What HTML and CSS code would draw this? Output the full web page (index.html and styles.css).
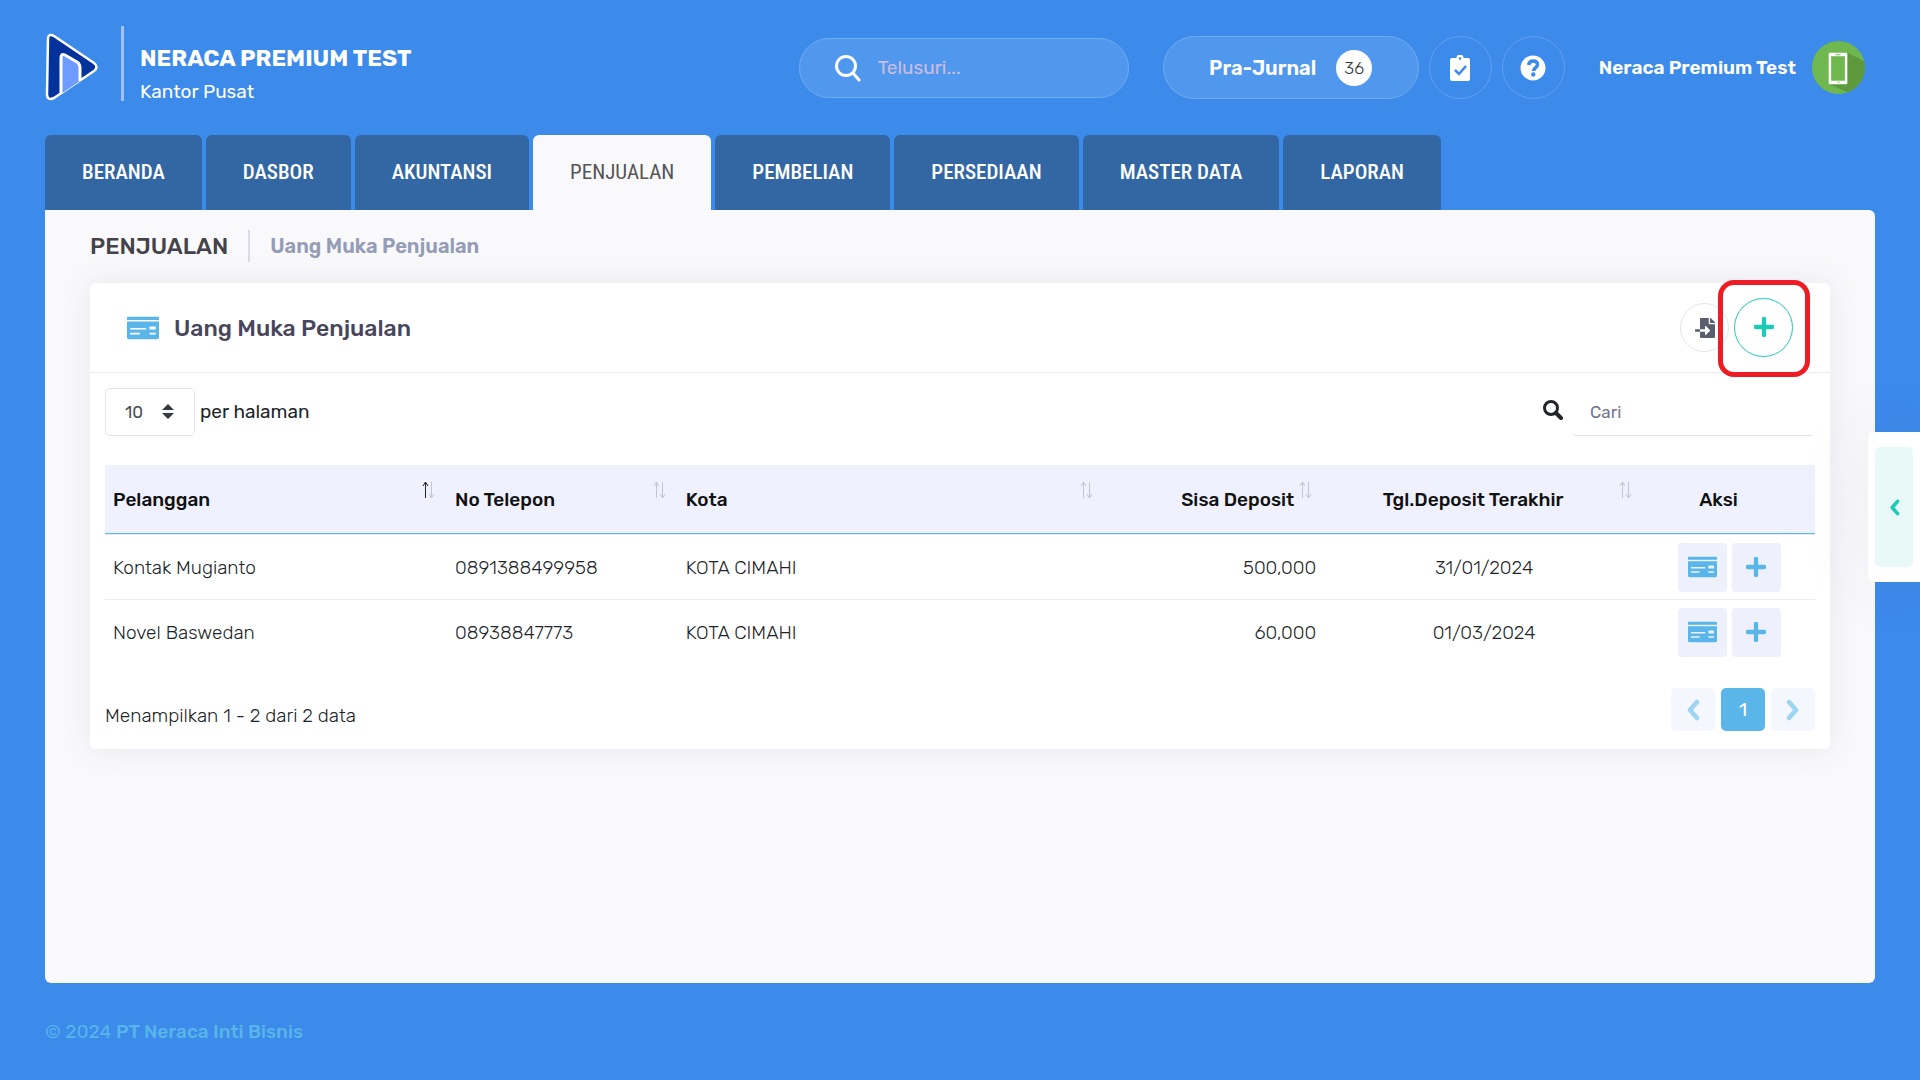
FILE: index.html
```
<!DOCTYPE html>
<html lang="id">
<head>
<meta charset="utf-8">
<meta name="viewport" content="width=device-width, initial-scale=1.0">
<title>Uang Muka Penjualan</title>
<link rel="stylesheet" href="styles.css">
</head>
<body>
<!-- icon -->
<svg class="sprite" aria-hidden="true">
  <symbol id="money" viewBox="0 0 640 512"><path d="M0 448c0 17.67 14.33 32 32 32h576c17.67 0 32-14.33 32-32V128H0v320zm448-208c0-8.84 7.16-16 16-16h96c8.84 0 16 7.16 16 16v32c0 8.84-7.16 16-16 16h-96c-8.84 0-16-7.16-16-16v-32zm0 120c0-4.42 3.58-8 8-8h112c4.42 0 8 3.58 8 8v16c0 4.42-3.58 8-8 8H456c-4.42 0-8-3.58-8-8v-16zM64 264c0-4.42 3.58-8 8-8h304c4.42 0 8 3.58 8 8v16c0 4.42-3.58 8-8 8H72c-4.42 0-8-3.58-8-8v-16zm0 96c0-4.42 3.58-8 8-8h176c4.42 0 8 3.58 8 8v16c0 4.42-3.58 8-8 8H72c-4.42 0-8-3.58-8-8v-16zM624 32H16C7.16 32 0 39.16 0 48v48h640V48c0-8.84-7.16-16-16-16z"/></symbol>
  <symbol id="plus" viewBox="0 0 448 512"><path d="M416 208H272V64c0-17.67-14.33-32-32-32h-32c-17.67 0-32 14.33-32 32v144H32c-17.67 0-32 14.33-32 32v32c0 17.67 14.33 32 32 32h144v144c0 17.67 14.33 32 32 32h32c17.67 0 32-14.33 32-32V304h144c17.67 0 32-14.33 32-32v-32c0-17.67-14.33-32-32-32z"/></symbol>
  <symbol id="import" viewBox="0 0 512 512"><path d="M16 288c-8.8 0-16 7.2-16 16v32c0 8.8 7.2 16 16 16h112v-64H16zm489-183L407.1 7c-4.5-4.5-10.6-7-17-7H384v128h128v-6.1c0-6.3-2.5-12.4-7-16.9zm-153 31V0H152c-13.3 0-24 10.7-24 24v264h128v-65.2c0-14.3 17.3-21.4 27.4-11.3L379 308c6.6 6.7 6.6 17.4 0 24l-95.7 96.4c-10.1 10.1-27.4 3-27.4-11.3V352H128v136c0 13.3 10.7 24 24 24h336c13.3 0 24-10.7 24-24V160H376c-13.2 0-24-10.8-24-24z"/></symbol>
  <symbol id="left" viewBox="0 0 14 22"><path d="M11 3 4 11l7 8" fill="none" stroke="currentColor" stroke-width="4.500" stroke-linecap="round" stroke-linejoin="round"/></symbol>
  <symbol id="right" viewBox="0 0 14 22"><path d="m3 3 7 8-7 8" fill="none" stroke="currentColor" stroke-width="4.500" stroke-linecap="round" stroke-linejoin="round"/></symbol>
  <symbol id="sort" viewBox="0 0 16 20">
    <path d="M4.500 18V3M2 6l2.500-4L7 6" fill="none" stroke="currentColor"/>
    <path d="M10.500 2v15M8 14l2.500 4 2.500-4" fill="none" stroke="#c3c5d2"/>
  </symbol>
</svg>

<header class="topbar">
  <a class="brand" href="#" aria-label="Neraca">
    <svg class="logo" viewBox="0 0 54 68" aria-hidden="true">
      <path d="M3 6Q3 0 9 3L49 30Q54 34 49 38L9 65Q2 68 2 61Z" fill="#03329c" stroke="#fff" stroke-width="2.500" stroke-linejoin="round"/>
      <path d="M16 61V25q0-5 4-3l12 7q3 2 3 6v13Z" fill="#6d9bff"/>
      <path d="M16 61V25q0-5 4-3l12 7q3 2 3 6v13" fill="none" stroke="#fff" stroke-width="3"/>
    </svg>
  </a>
  <div class="company">
    <h1>NERACA PREMIUM TEST</h1>
    <span>Kantor Pusat</span>
  </div>
  <div class="search">
    <svg viewBox="0 0 28 28" aria-hidden="true"><circle cx="12" cy="12" r="9.500" fill="none" stroke="#fff" stroke-width="3"/><path d="m19 19 6 7" stroke="#fff" stroke-width="3" stroke-linecap="round"/></svg>
    <input type="text" placeholder="Telusuri..." aria-label="Telusuri">
  </div>
  <button type="button" class="prajurnal">Pra-Jurnal <span class="badge">36</span></button>
  <button type="button" class="round" aria-label="Tugas">
    <svg viewBox="0 0 20 26" aria-hidden="true"><path d="M2 3h4.500a3.500 3.500 0 0 1 7 0H18q2 0 2 2v19q0 2-2 2H2q-2 0-2-2V5q0-2 2-2Z" fill="#fff"/><circle cx="10" cy="3.500" r="1.300" fill="#3c8aea"/><path d="m5 15 4 4 7-8" fill="none" stroke="#3c8aea" stroke-width="2.500"/></svg>
  </button>
  <button type="button" class="round" aria-label="Bantuan">
    <svg viewBox="0 0 26 26" aria-hidden="true"><circle cx="13" cy="13" r="12.500" fill="#fff"/><path d="M8.500 10q1-4 4.500-4 4.500 0 4.500 3.800c0 3.200-4 2.700-4 6.200" fill="none" stroke="#3c8aea" stroke-width="3.500"/><circle cx="13.300" cy="19.500" r="2.200" fill="#3c8aea"/></svg>
  </button>
  <a class="user" href="#">
    <span>Neraca Premium Test</span>
    <svg viewBox="0 0 54 54" aria-hidden="true">
      <clipPath id="bulat"><circle cx="27" cy="27" r="27"/></clipPath>
      <circle cx="27" cy="27" r="27" fill="#6fb74f"/>
      <path d="M36 12 54 21V54H40L18 44Z" fill="#5f993e" clip-path="url(#bulat)"/>
      <rect x="17" y="12" width="19" height="32" rx="1" fill="#fff"/>
      <path d="M19.500 15.500h14v25h-14z" fill="#6fb74f"/>
      <path d="M24 14h5M26 42h2" stroke="#6fb74f"/>
    </svg>
  </a>
</header>

<nav class="tabs">
  <a href="#">BERANDA</a>
  <a href="#">DASBOR</a>
  <a href="#">AKUNTANSI</a>
  <a href="#" class="active">PENJUALAN</a>
  <a href="#">PEMBELIAN</a>
  <a href="#">PERSEDIAAN</a>
  <a href="#">MASTER DATA</a>
  <a href="#">LAPORAN</a>
</nav>

<main class="content">
  <div class="subheader">
    <h2>PENJUALAN</h2>
    <span>Uang Muka Penjualan</span>
  </div>

  <section class="card">
    <div class="card-head">
      <svg class="title-icon" aria-hidden="true"><use href="#money"/></svg>
      <h3>Uang Muka Penjualan</h3>
      <button type="button" class="btn-import" aria-label="Impor"><svg aria-hidden="true"><use href="#import"/></svg></button>
      <div class="add-wrap">
        <button type="button" class="btn-add" aria-label="Tambah"><svg aria-hidden="true"><use href="#plus"/></svg></button>
        <span class="marker"></span>
      </div>
    </div>

    <div class="card-body">
      <div class="filter">
        <div class="select-box">
          <select id="perPage"><option>10</option><option>25</option><option>50</option></select>
          <svg viewBox="0 0 12 16" aria-hidden="true"><path d="M0 6h12L6 0ZM0 9h12l-6 6Z"/></svg>
        </div>
        <label for="perPage">per halaman</label>
        <label class="cari-label" for="cari" aria-label="Cari">
          <svg viewBox="0 0 20 20" aria-hidden="true"><circle cx="8" cy="8" r="6.500" fill="none" stroke="currentColor" stroke-width="3"/><path d="m13 13 5 5" stroke="currentColor" stroke-width="4" stroke-linecap="round"/></svg>
        </label>
        <input type="text" id="cari" placeholder="Cari">
      </div>

      <table>
        <colgroup><col class="c1"><col class="c2"><col class="c3"><col class="c4"><col class="c5"><col class="c6"></colgroup>
        <thead>
          <tr>
            <th class="asc">Pelanggan<svg class="sort" aria-hidden="true"><use href="#sort"/></svg></th>
            <th>No Telepon<svg class="sort" aria-hidden="true"><use href="#sort"/></svg></th>
            <th>Kota<svg class="sort" aria-hidden="true"><use href="#sort"/></svg></th>
            <th class="right">Sisa Deposit<svg class="sort" aria-hidden="true"><use href="#sort"/></svg></th>
            <th class="center">Tgl.Deposit Terakhir<svg class="sort" aria-hidden="true"><use href="#sort"/></svg></th>
            <th class="center">Aksi</th>
          </tr>
        </thead>
        <tbody>
          <tr>
            <td>Kontak Mugianto</td>
            <td>0891388499958</td>
            <td>KOTA CIMAHI</td>
            <td class="right">500,000</td>
            <td class="center">31/01/2024</td>
            <td>
              <div class="aksi">
                <button type="button" aria-label="Detail"><svg class="i-money" aria-hidden="true"><use href="#money"/></svg></button>
                <button type="button" aria-label="Tambah"><svg class="i-plus" aria-hidden="true"><use href="#plus"/></svg></button>
              </div>
            </td>
          </tr>
          <tr>
            <td>Novel Baswedan</td>
            <td>08938847773</td>
            <td>KOTA CIMAHI</td>
            <td class="right">60,000</td>
            <td class="center">01/03/2024</td>
            <td>
              <div class="aksi">
                <button type="button" aria-label="Detail"><svg class="i-money" aria-hidden="true"><use href="#money"/></svg></button>
                <button type="button" aria-label="Tambah"><svg class="i-plus" aria-hidden="true"><use href="#plus"/></svg></button>
              </div>
            </td>
          </tr>
        </tbody>
      </table>

      <div class="table-foot">
        <span>Menampilkan 1 - 2 dari 2 data</span>
        <div class="pages">
          <button type="button" aria-label="Sebelumnya"><svg aria-hidden="true"><use href="#left"/></svg></button>
          <button type="button" class="current">1</button>
          <button type="button" aria-label="Berikutnya"><svg aria-hidden="true"><use href="#right"/></svg></button>
        </div>
      </div>
    </div>
  </section>
</main>

<footer class="footer">© 2024 <a href="#">PT Neraca Inti Bisnis</a></footer>

<div class="side-panel">
  <button type="button" aria-label="Buka panel"><svg aria-hidden="true"><use href="#left"/></svg></button>
</div>
</body>
</html>
```
FILE: styles.css
```
* {
  box-sizing: border-box;
}
body {
  display: flex;
  flex-direction: column;
  min-height: 100vh;
  margin: 0;
  padding: 0 45px;
  background: #3c8aea;
  color: #212529;
  font-family: Rubik, Inter, "Liberation Sans", sans-serif;
  font-size: 19px;
  overflow-x: hidden;
}
h1,h2,h3 {
  margin: 0;
}
a {
  color: inherit;
  text-decoration: none;
}
button,input,select {
  font-family: inherit;
  font-size: 19px;
}
button {
  display: flex;
  align-items: center;
  justify-content: center;
  padding: 0;
  border: 0;
}
svg {
  display: block;
  fill: currentColor;
}
.sprite {
  position: absolute;
  width: 0;
  height: 0;
}

/* header */
.topbar {
  display: flex;
  align-items: center;
  height: 135px;
  padding-right: 10px;
  color: #fff;
}
.brand {
  padding: 0 22px 2px 0;
}
.logo {
  width: 54px;
  height: 68px;
}
.company {
  display: flex;
  flex-direction: column;
  justify-content: space-between;
  height: 75px;
  margin-right: auto;
  margin-bottom: 8px;
  padding: 17px 0 0 16px;
  border-left: 3px solid #9dc4f4;
}
.company h1 {
  font-size: 23px;
  line-height: 30px;
}
.company span {
  line-height: 18px;
}
.search {
  display: flex;
  align-items: center;
  width: 330px;
  height: 60px;
  margin-right: 34px;
  padding-left: 34px;
  border: 1px solid #71abf0;
  border-radius: 30px;
  background: #5098ed;
}
.search svg {
  width: 28px;
  height: 28px;
}
.search input {
  width: 220px;
  margin-left: 16px;
  padding: 0;
  border: 0;
  background: none;
  color: #fff;
}
.search input::placeholder {
  color: #cdbde0;
}
.prajurnal {
  width: 256px;
  height: 63px;
  gap: 20px;
  border: 1px solid #71abf0;
  border-radius: 32px;
  background: #5098ed;
  color: #fff;
  font-size: 20px;
  font-weight: 600;
}
.badge {
  width: 36px;
  height: 36px;
  border-radius: 50%;
  background: #fff;
  color: #333;
  font-size: 17px;
  font-weight: 300;
  line-height: 36px;
}
.round {
  width: 63px;
  height: 63px;
  margin-left: 10px;
  border: 1px solid #61a1ee;
  border-radius: 50%;
  background: none;
}
.round svg {
  height: 26px;
}
.user {
  display: flex;
  align-items: center;
  gap: 16px;
  margin-left: 34px;
  font-weight: 600;
}
.user svg {
  width: 53px;
  height: 53px;
}

/* menu */
.tabs {
  display: flex;
  gap: 4px;
  font-family: "Ubuntu Condensed", "Roboto Condensed", "Liberation Sans Narrow", Roboto, sans-serif;
  font-size: 21px;
}
.tabs a {
  padding: 0 37px;
  border-radius: 6px 6px 0 0;
  background: #3267a3;
  color: #fff;
  font-weight: 500;
  line-height: 75px;
}
.tabs .active {
  background: #f9f9fc;
  color: #555;
  font-weight: 400;
}

.content {
  flex: 1;
  padding: 20px 45px 45px;
  border-radius: 0 6px 6px 6px;
  background: #f9f9fc;
}
.subheader {
  display: flex;
  align-items: center;
  height: 32px;
  margin-bottom: 21px;
}
.subheader h2 {
  padding-right: 20px;
  border-right: 2px solid #dcdce8;
  color: #434349;
  font-size: 23px;
  font-weight: 500;
  line-height: 32px;
}
.subheader span {
  padding-left: 20px;
  color: #959cb6;
  font-size: 20px;
  font-weight: 600;
}

/* card */
.card {
  border-radius: 6px;
  background: #fff;
  box-shadow: 0 0 30px rgba(82,63,105,.1);
}
.card-head {
  display: flex;
  align-items: center;
  height: 90px;
  padding: 0 37px;
  border-bottom: 1px solid #ebedf2;
}
.title-icon {
  width: 32px;
  height: 26px;
  color: #5ab6e9;
}
.card-head h3 {
  margin: 0 auto 0 15px;
  color: #48465b;
  font-size: 23px;
  font-weight: 500;
}
.btn-import,.btn-add {
  border-radius: 50%;
  background: #fff;
}
.btn-import {
  width: 49px;
  height: 49px;
  border: 1px solid #e2e5ec;
  color: #595d6e;
}
.btn-import svg {
  width: 20px;
  height: 20px;
}
.add-wrap {
  position: relative;
  margin-left: 5px;
}
.btn-add {
  width: 59px;
  height: 59px;
  padding-bottom: 2px;
  border: 1px solid #1dc9b7;
  color: #1dc9b7;
}
.btn-add svg {
  width: 20px;
  height: 24px;
}
.marker {
  position: absolute;
  top: -18px;
  left: -16px;
  width: 92px;
  height: 97px;
  border: 5px solid #ee1c25;
  border-radius: 16px;
  pointer-events: none;
}
.card-body {
  padding: 15px 15px 6px;
}
.filter {
  display: flex;
  align-items: center;
  margin-bottom: 29px;
}
.filter label {
  padding-bottom: 2px;
}
.select-box {
  position: relative;
  margin-right: 5px;
}
.select-box select {
  display: block;
  width: 90px;
  height: 48px;
  padding: 0 19px;
  border: 1px solid #e2e5ec;
  border-radius: 5px;
  background: #fff;
  color: #495057;
  font-size: 17px;
  appearance: none;
}
.select-box svg {
  position: absolute;
  top: 16px;
  right: 21px;
  width: 12px;
  height: 16px;
  color: #343a40;
  pointer-events: none;
}
.cari-label {
  margin: 0 8px 2px auto;
}
.cari-label svg {
  width: 20px;
  height: 20px;
}
#cari {
  width: 244px;
  height: 48px;
  padding: 0 19px;
  border: 0;
  border-bottom: 1px solid #e2e5ec;
  border-radius: 5px;
  background: none;
  font-size: 17px;
}
#cari::placeholder {
  color: #74788d;
}

/* tabel */
table {
  width: 100%;
  table-layout: fixed;
  border-collapse: separate;
  border-spacing: 0;
}
.c1 { width: 20%; }
.c2 { width: 13.5%; }
.c3 { width: 25%; }
.c4 { width: 12.8%; }
.c5 { width: 18.7%; }
.c6 { width: 10%; }
th {
  position: relative;
  height: 69px;
  padding: 0 30px 0 8px;
  border-bottom: 1px solid #5ab6e9;
  background: #eff1fe;
  color: #111;
  font-weight: 500;
  text-align: left;
  white-space: nowrap;
}
.sort {
  position: absolute;
  top: 15px;
  right: 10px;
  width: 16px;
  height: 20px;
  color: #c3c5d2;
}
.asc .sort {
  color: #222;
}
td {
  height: 65px;
  padding: 0 8px;
  border-top: 1px solid #ebedf2;
  font-weight: 300;
}
.right {
  text-align: right;
}
.center {
  text-align: center;
}
.aksi {
  display: flex;
  justify-content: center;
  gap: 5px;
}
.aksi button {
  width: 49px;
  height: 49px;
  border-radius: 4px;
  background: #eef0fc;
  color: #5ab6e9;
}
.i-money {
  width: 29px;
  height: 24px;
}
.i-plus {
  width: 20px;
  height: 24px;
}
.table-foot {
  display: flex;
  justify-content: space-between;
  margin-top: 24px;
  font-weight: 300;
}
.table-foot > span {
  line-height: 55px;
}
.pages {
  display: flex;
  gap: 6px;
}
.pages button {
  width: 44px;
  height: 43px;
  border-radius: 5px;
  background: #f4f8fe;
  color: #9cd4f1;
}
.pages svg {
  width: 14px;
  height: 22px;
}
.pages .current {
  background: #5ab6e9;
  color: #fff;
}

.footer {
  padding: 37px 0;
  color: #58b5e9;
  line-height: 23px;
}
.footer a {
  font-weight: 500;
}

/* panel samping */
.side-panel {
  position: fixed;
  top: 40%;
  right: 0;
  padding: 15px 7px;
  border-radius: 5px 0 0 5px;
  background: #fff;
  box-shadow: 0 0 75px rgba(82,63,105,.08);
}
.side-panel button {
  width: 38px;
  height: 120px;
  border-radius: 5px;
  background: #e8f9f7;
  color: #1dc9b7;
}
.side-panel svg {
  width: 11px;
  height: 17px;
}
```
